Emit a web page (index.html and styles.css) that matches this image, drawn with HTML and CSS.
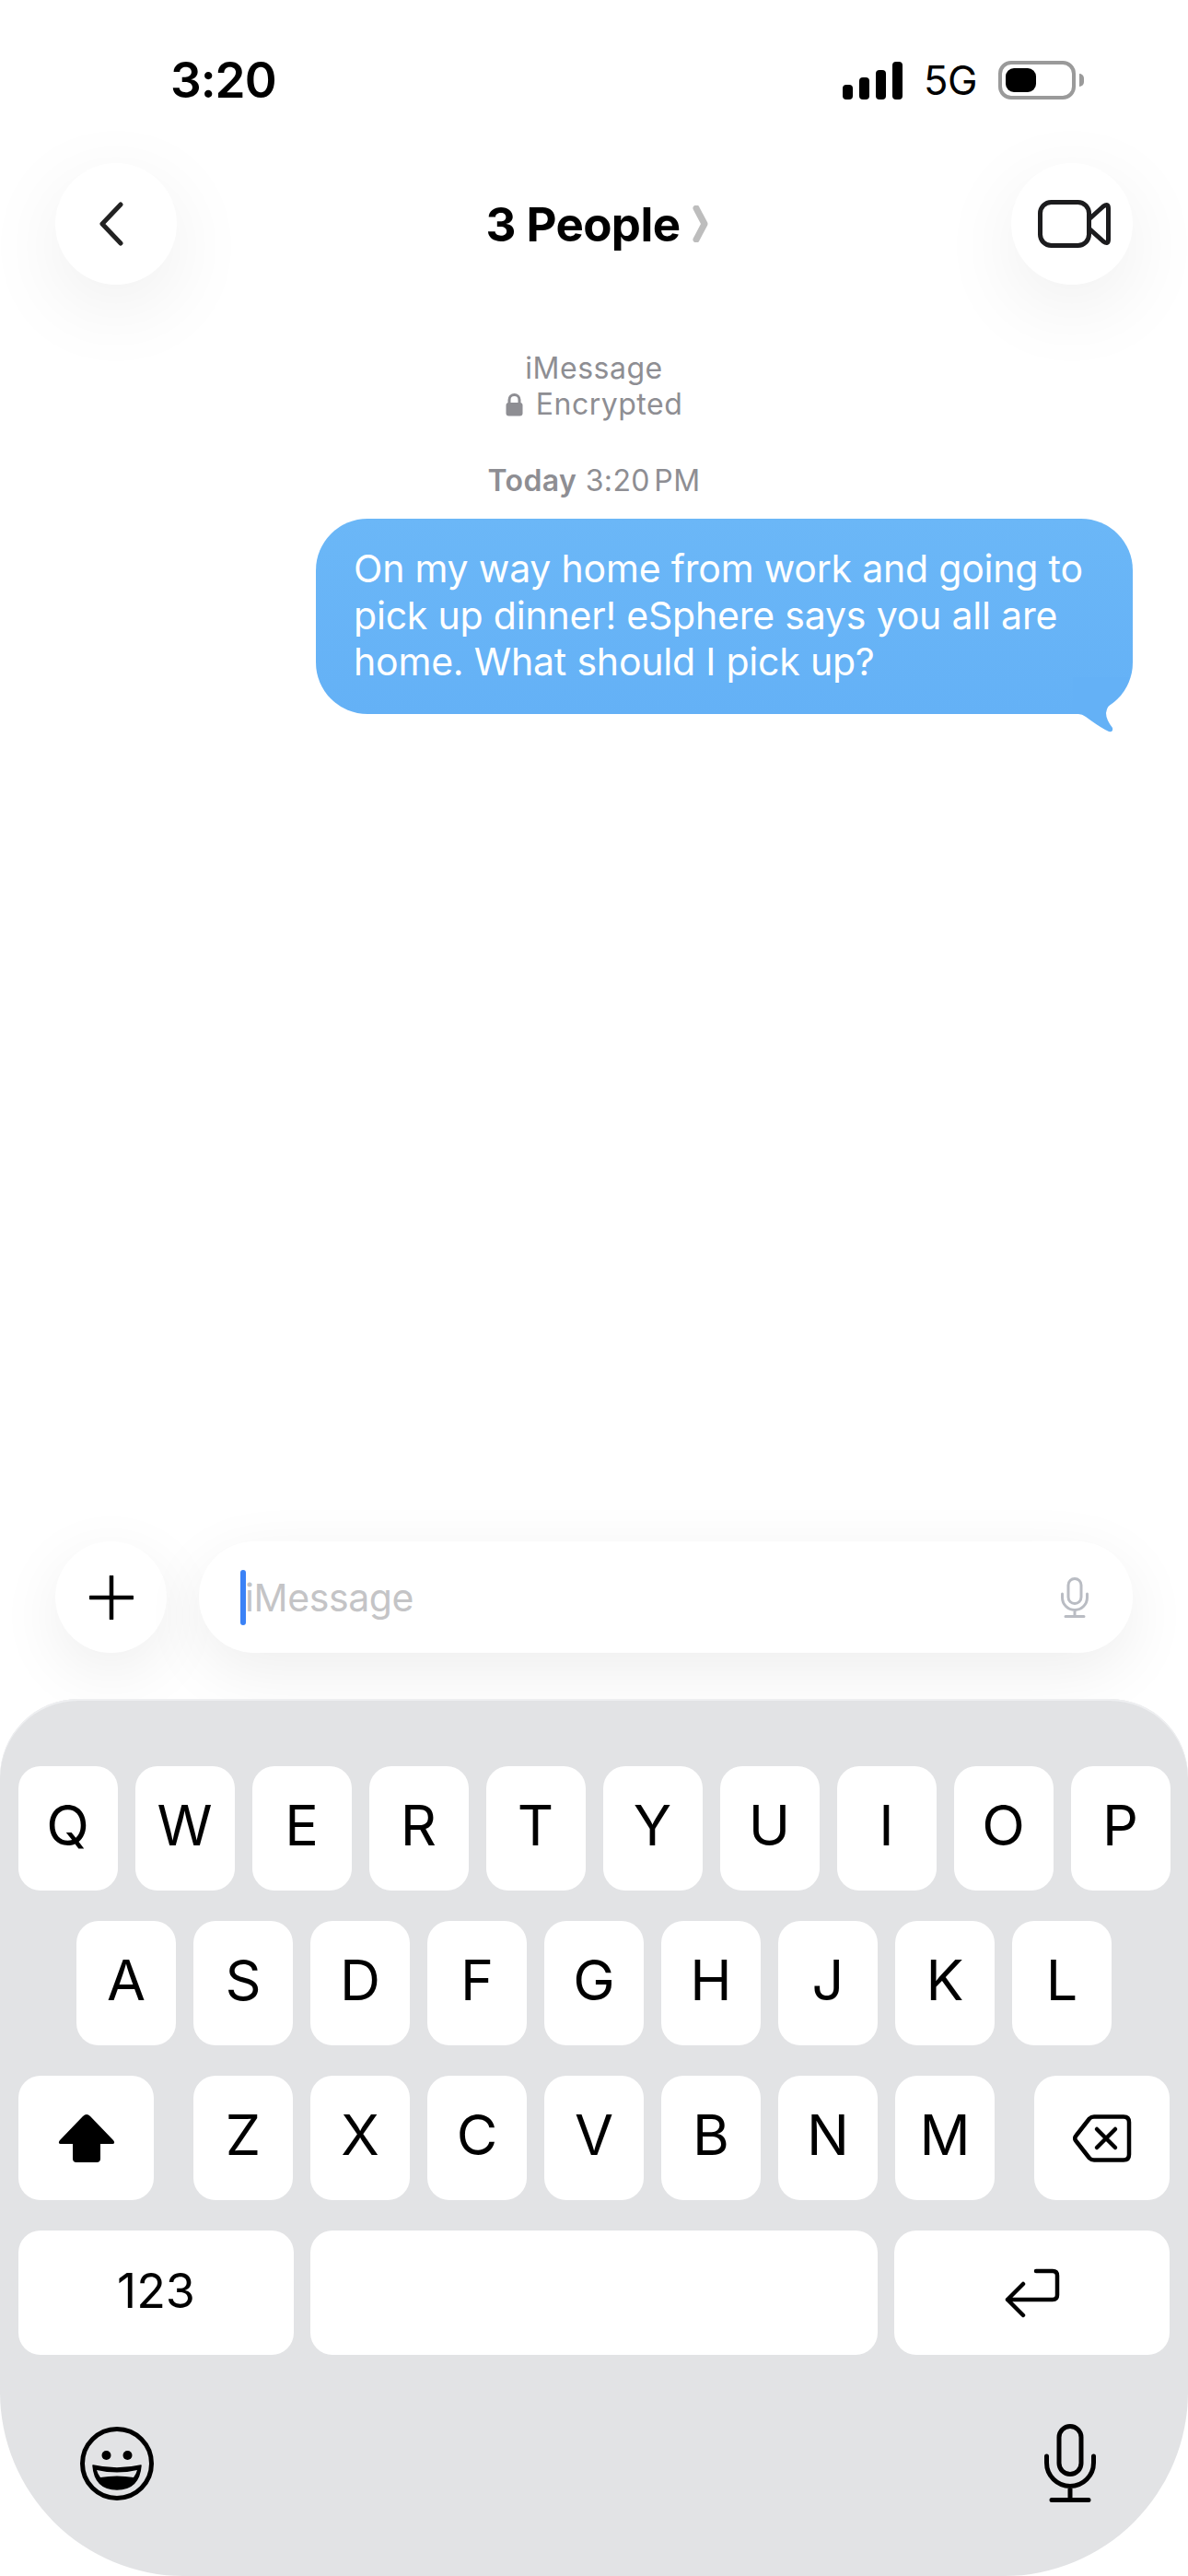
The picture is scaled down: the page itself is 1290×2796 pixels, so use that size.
FILE: index.html
```html
<!DOCTYPE html>
<html lang="en">
<head>
  <meta charset="UTF-8" />
  <title>3 People | Messages</title>
  <link rel="stylesheet" href="styles.css">
</head>
<body>
  <div class="status-bar">
    <span class="time">3:20</span>
    <div class="status-icons">
      <div class="signal"><i class="b1"></i><i class="b2"></i><i class="b3"></i><i class="b4"></i></div>
      <span class="net">5G</span>
      <div class="battery"><div class="level"></div></div>
      <div class="nub"></div>
    </div>
  </div>

  <header class="nav">
    <div class="round-btn">
      <svg class="ico-back" width="30" height="50" viewBox="0 0 30 50"><path d="M25 4 L5 25 L25 46" fill="none" stroke="#222" stroke-width="5" stroke-linecap="round" stroke-linejoin="round"/></svg>
    </div>
    <div class="title">
      <span>3 People</span>
      <svg width="18" height="40" viewBox="0 0 18 40"><path d="M4 3 L13 20 L4 37" fill="none" stroke="#bdbdbd" stroke-width="7" stroke-linecap="round" stroke-linejoin="round"/></svg>
    </div>
    <div class="round-btn">
      <svg class="ico-video" width="82" height="56" viewBox="0 0 82 56"><rect x="4.500" y="4.500" width="53" height="47" rx="12" fill="none" stroke="#1c1c1e" stroke-width="5"/><path d="M57.500 23 L73 9 Q78.500 5 78.500 11 V45 Q78.500 51 73 47 L57.500 33" fill="none" stroke="#1c1c1e" stroke-width="5" stroke-linejoin="round"/></svg>
    </div>
  </header>

  <main class="chat">
    <div class="meta">
      <div>iMessage</div>
      <div class="enc">
        <svg width="19" height="26" viewBox="0 0 19 26"><path d="M4 12 V8 a5.500 5.500 0 0 1 11 0 V12" fill="none" stroke="#8e8e93" stroke-width="3"/><rect x="0.500" y="11" width="18" height="14.500" rx="3" fill="#8e8e93"/></svg>
        <span>Encrypted</span>
      </div>
    </div>
    <div class="stamp"><b>Today</b> <span class="stamp-time">3:20 PM</span></div>
    <div class="bubble">
      On my way home from work and going to<br>pick up dinner! eSphere says you all are<br>home. What should I pick up?
      <svg class="tail" width="64" height="62" viewBox="0 0 64 62"><path d="M0 40 L6 40 Q10 40 14 43 Q26 52 35 57 L39 59 Q44 60 43 55 Q36 46 36 39 Q37 31 43 27 Q58 15 62 0 L0 0 Z" fill="#64b1f6"/></svg>
    </div>
  </main>

  <div class="composer">
    <div class="plus-btn">
      <svg width="48" height="48" viewBox="0 0 48 48"><path d="M24 1 V47 M1 24 H47" stroke="#000" stroke-width="4.500" stroke-linecap="round"/></svg>
    </div>
    <div class="input">
      <div class="caret"></div>
      <span class="placeholder">iMessage</span>
      <svg class="ico-mic" width="30" height="44" viewBox="0 0 30 44"><rect x="8" y="1.500" width="14" height="27" rx="7" fill="none" stroke="#b9bcc3" stroke-width="3"/><path d="M1.500 18 V22 a13.500 13.500 0 0 0 27 0 V18 M15 36 V42 M5 42.500 H25" fill="none" stroke="#b9bcc3" stroke-width="3" stroke-linecap="round"/></svg>
    </div>
  </div>

  <div class="keyboard">
    <div class="row">
      <div class="key">Q</div><div class="key">W</div><div class="key">E</div><div class="key">R</div><div class="key">T</div><div class="key">Y</div><div class="key">U</div><div class="key">I</div><div class="key">O</div><div class="key">P</div>
    </div>
    <div class="row">
      <div class="key">A</div><div class="key">S</div><div class="key">D</div><div class="key">F</div><div class="key">G</div><div class="key">H</div><div class="key">J</div><div class="key">K</div><div class="key">L</div>
    </div>
    <div class="row row-3">
      <div class="key wide">
        <svg width="62" height="54" viewBox="0 0 62 54"><path d="M31 1 Q33 1 35 3 L60 29 Q63 33 58 33 H46 V49 Q46 53 42 53 H20 Q16 53 16 49 V33 H4 Q-1 33 2 29 L27 3 Q29 1 31 1 Z" fill="#000"/></svg>
      </div>
      <div class="letters">
        <div class="key">Z</div><div class="key">X</div><div class="key">C</div><div class="key">V</div><div class="key">B</div><div class="key">N</div><div class="key">M</div>
      </div>
      <div class="key wide">
        <svg width="64" height="54" viewBox="0 0 64 54"><path d="M23 3.500 H55 Q61 3.500 61 9.500 V44.500 Q61 50.500 55 50.500 H23 Q20 50.500 18 48.500 L3.500 30 Q1 27 3.500 24 L18 5.500 Q20 3.500 23 3.500 Z" fill="none" stroke="#000" stroke-width="4.500" stroke-linejoin="round"/><path d="M26 17 L46 37 M46 17 L26 37" stroke="#000" stroke-width="4.500" stroke-linecap="round"/></svg>
      </div>
    </div>
    <div class="row row-4">
      <div class="key num">123</div>
      <div class="key"></div>
      <div class="key icon-key">
        <svg width="62" height="55" viewBox="0 0 62 55"><path d="M35 4 H53 Q58 4 58 9 V30 Q58 35 53 35 H4 M21 18 L4 35 L21 52" fill="none" stroke="#000" stroke-width="4.500" stroke-linecap="round" stroke-linejoin="round"/></svg>
      </div>
    </div>
    <div class="kb-foot">
      <svg class="ico-emoji" width="82" height="82" viewBox="0 0 82 82"><circle cx="41" cy="41" r="37.500" fill="none" stroke="#000" stroke-width="5"/><circle cx="29.500" cy="32" r="5" fill="#000"/><circle cx="52.500" cy="32" r="5" fill="#000"/><path d="M15 43 Q41 49 67 43 Q65 69 41 69 Q17 69 15 43 Z" fill="#000" stroke="#000" stroke-width="1.500" stroke-linejoin="round"/><path d="M19 48 Q41 53 63 48 Q62 52 59 56 Q41 53 23 56 Q20 52 19 48 Z" fill="#e2e3e5"/></svg>
      <svg width="56" height="86" viewBox="0 0 56 86"><rect x="16" y="2.500" width="24" height="52" rx="12" fill="none" stroke="#000" stroke-width="5"/><path d="M2.500 35 V42 a25.500 25.500 0 0 0 51 0 V35 M28 68 V82 M8 82.500 H48" fill="none" stroke="#000" stroke-width="5" stroke-linecap="round"/></svg>
    </div>
  </div>
</body>
</html>
```

FILE: styles.css
```css
html, body { margin: 0; padding: 0; }
body { width: 1290px; height: 2796px; overflow: hidden; background: #fff; font-family: Inter, "Liberation Sans", sans-serif; color: #000; display: flex; flex-direction: column; }

.status-bar { height: 174px; padding: 0 113px 0 185px; display: flex; justify-content: space-between; align-items: center; box-sizing: border-box; }
.time { font-size: 53px; font-weight: 600; letter-spacing: -1px; }
.status-icons { display: flex; align-items: center; }
.signal { display: flex; align-items: flex-end; gap: 7px; height: 41px; }
.signal i { display: block; width: 11px; border-radius: 4px; background: #000; }
.b1 { height: 16px; }
.b2 { height: 24px; }
.b3 { height: 32px; }
.b4 { height: 41px; }
.net { font-size: 43.500px; margin: 0 23px 0 23px; letter-spacing: -.5px; }
.battery { width: 84px; height: 42px; box-sizing: border-box; border: 4px solid #9a9a9a; border-radius: 14px; padding: 4px; }
.level { width: 33px; height: 100%; background: #000; border-radius: 9px; }
.nub { width: 5px; height: 14px; margin-left: 4px; background: #9a9a9a; border-radius: 0 5px 5px 0; }

.nav { display: flex; justify-content: space-between; align-items: center; margin-top: 3px; padding: 0 60px; }
.round-btn { width: 132px; height: 132px; border-radius: 50%; background: #fff; box-shadow: 0 24px 90px rgba(0,0,0,.07); display: flex; align-items: center; justify-content: center; }
.ico-back { margin-right: 10px; }
.ico-video { margin-left: 4px; }
.title { display: flex; align-items: center; gap: 14px; margin-left: 8px; font-size: 51px; font-weight: 700; letter-spacing: -.6px; }

.chat { flex: 1; display: flex; flex-direction: column; }
.meta { margin-top: 71px; text-align: center; font-size: 32px; line-height: 39px; letter-spacing: .5px; color: #8e8e93; }
.enc { display: flex; justify-content: center; align-items: center; gap: 14px; }
.stamp { margin-top: 45px; text-align: center; font-size: 32px; line-height: 38px; letter-spacing: .4px; color: #8e8e93; }
.stamp b { font-weight: 600; }
.stamp-time { word-spacing: -5px; }
.bubble { position: relative; align-self: flex-end; margin: 22px 60px 0 0; width: 887px; height: 212px; box-sizing: border-box; padding: 29px 0 0 41px; border-radius: 56px; background: linear-gradient(#6bb7f7, #64b1f6); color: #fff; font-size: 41px; line-height: 50.700px; letter-spacing: -.2px; }
.tail { position: absolute; left: 822px; top: 172px; }

.composer { display: flex; gap: 35px; padding: 0 60px; margin-bottom: 50px; }
.plus-btn { width: 121px; height: 121px; flex: none; border-radius: 50%; background: #fff; box-shadow: 0 20px 70px rgba(0,0,0,.07); display: flex; align-items: center; justify-content: center; }
.input { flex: 1; height: 121px; border-radius: 60px; background: #fff; box-shadow: 0 20px 70px rgba(0,0,0,.07); display: flex; align-items: center; padding: 0 48px 0 45px; }
.caret { width: 6px; height: 60px; background: #3b82f6; border-radius: 3px; margin-right: -1px; }
.placeholder { font-size: 41px; letter-spacing: -.4px; color: #c4c4c6; }
.ico-mic { margin-left: auto; }

.keyboard { height: 952px; box-sizing: border-box; padding-top: 73px; background: #e2e3e5; border-radius: 85px 85px 200px 200px; box-shadow: inset 0 2px 0 #eeeff1; }
.row { display: flex; justify-content: center; gap: 19px; margin-bottom: 33px; }
.key { width: 108px; height: 135px; border-radius: 24px; background: #fff; display: flex; align-items: center; justify-content: center; font-size: 61px; padding-bottom: 8px; box-sizing: border-box; }
.row-3 { justify-content: space-between; padding: 0 20px; gap: 0; }
.letters { display: flex; gap: 19px; }
.key.wide { width: 147px; padding-bottom: 0; }
.row-4 { display: grid; grid-template-columns: 299px 1fr 299px; gap: 18px; padding: 0 20px; }
.row-4 .key { width: auto; }
.key.icon-key { padding-bottom: 0; }
.key.num { font-size: 52px; padding-bottom: 5px; }
.kb-foot { display: flex; justify-content: space-between; align-items: center; padding: 0 100px 0 86px; margin-top: 75px; }
```
